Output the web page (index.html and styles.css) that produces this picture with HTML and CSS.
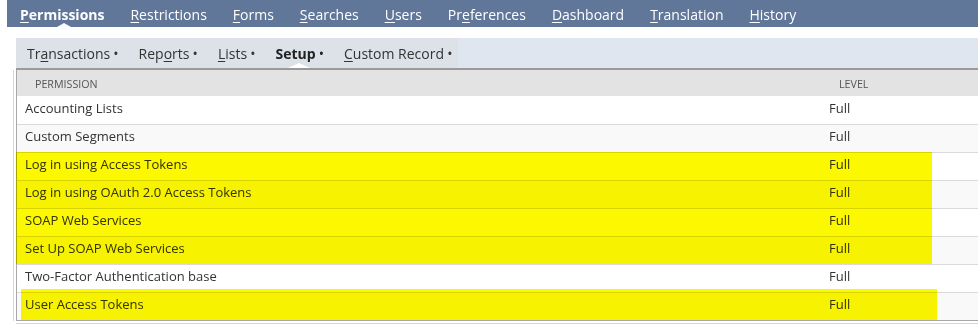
FILE: index.html
```html
<!DOCTYPE html>
<html>
<head>
<meta charset="utf-8">
<link rel="stylesheet" href="styles.css">
</head>
<body>
<div class="page">
  <nav class="topnav">
    <a class="tab active"><u>P</u>ermissions</a>
    <a class="tab"><u>R</u>estrictions</a>
    <a class="tab"><u>F</u>orms</a>
    <a class="tab"><u>S</u>earches</a>
    <a class="tab"><u>U</u>sers</a>
    <a class="tab">Pr<u>e</u>ferences</a>
    <a class="tab"><u>D</u>ashboard</a>
    <a class="tab"><u>T</u>ranslation</a>
    <a class="tab"><u>H</u>istory</a>
  </nav>
  <div class="content">
    <div class="subnav">
      <div class="subtabs">
        <a class="subtab">Tr<u>a</u>nsactions <span class="dot">•</span></a>
        <a class="subtab">Rep<u>o</u>rts <span class="dot">•</span></a>
        <a class="subtab"><u>L</u>ists <span class="dot">•</span></a>
        <a class="subtab active">Setup <span class="dot">•</span></a>
        <a class="subtab"><u>C</u>ustom Record <span class="dot">•</span></a>
      </div>
    </div>
    <div class="tablewrap">
      <table class="perms">
        <thead>
          <tr><th class="c1">Permission</th><th class="c2">Level</th></tr>
        </thead>
        <tbody>
          <tr><td>Accounting Lists</td><td>Full</td></tr>
          <tr><td>Custom Segments</td><td>Full</td></tr>
          <tr><td>Log in using Access Tokens</td><td>Full</td></tr>
          <tr><td>Log in using OAuth 2.0 Access Tokens</td><td>Full</td></tr>
          <tr><td>SOAP Web Services</td><td>Full</td></tr>
          <tr><td>Set Up SOAP Web Services</td><td>Full</td></tr>
          <tr><td>Two-Factor Authentication base</td><td>Full</td></tr>
          <tr><td>User Access Tokens</td><td>Full</td></tr>
        </tbody>
      </table>
    </div>
  </div>
  <div class="mark mark1"></div>
  <div class="mark mark2"></div>
</div>
</body>
</html>
```
FILE: styles.css
```css
html, body {
  margin: 0;
  padding: 0;
  background: #fff;
}
.page {
  position: relative;
  width: 978px;
  height: 334px;
  overflow: hidden;
  font-family: "Open Sans", "Liberation Sans", sans-serif;
}
.topnav {
  margin-left: 7px;
  height: 27px;
  background: #607799;
  display: flex;
  align-items: stretch;
  padding-left: 13px;
  gap: 26px;
}
.tab {
  position: relative;
  color: #fff;
  font-size: 14px;
  line-height: 27px;
  padding-top: 1px;
  box-sizing: border-box;
  height: 27px;
  white-space: nowrap;
}
.tab u {
  text-underline-offset: 2px;
}
.tab.active {
  font-weight: 700;
}
.tab.active::after {
  content: "";
  position: absolute;
  left: 37px;
  bottom: 0;
  border-left: 7px solid transparent;
  border-right: 7px solid transparent;
  border-bottom: 4px solid #fff;
}
.content {
  margin-left: 16px;
  margin-top: 11px;
}
.subnav {
  height: 30px;
  background: #e0e6ef;
  border-bottom: 2px solid #9a9a9a;
  display: flex;
}
.subtabs {
  display: flex;
  align-items: stretch;
  gap: 20px;
  padding-left: 11px;
  padding-right: 6px;
  background: #dde1e8;
}
.subtab {
  position: relative;
  color: #333;
  font-size: 14px;
  line-height: 30px;
  padding-top: 1px;
  box-sizing: border-box;
  height: 30px;
  white-space: nowrap;
}
.subtab u {
  text-underline-offset: 2px;
}
.subtab .dot {
  font-size: 14px;
  font-weight: 400;
  margin-left: -0.5px;
}
.subtab.active {
  font-weight: 700;
  color: #222;
}
.subtab.active::after {
  content: "";
  position: absolute;
  left: 13px;
  bottom: 0;
  border-left: 11px solid transparent;
  border-right: 11px solid transparent;
  border-bottom: 5px solid #fff;
}
.tablewrap {
  border-left: 1px solid #a8a8a8;
  border-bottom: 1px solid #a8a8a8;
  box-shadow: 0 2px 0 0 #fff, 0 3px 0 0 #d6d6d6, -2px 0 0 0 #fff, -3px 0 0 0 #d6d6d6;
}
.perms {
  width: 100%;
  border-collapse: collapse;
  table-layout: fixed;
}
.perms th {
  height: 26px;
  background: #e3e3e3;
  text-align: left;
  font-weight: 400;
  font-size: 10.7px;
  color: #555;
  text-transform: uppercase;
  padding: 1px 0 0 18px;
  box-sizing: border-box;
}
.perms th.c1 {
  width: 804px;
}
.perms td {
  height: 22px;
  padding: 0 0 5px 8px;
  font-size: 13px;
  line-height: 18px;
  color: #333;
  border-top: 1px solid #dadada;
}
.perms tbody tr:first-child td {
  border-top: none;
  height: 23px;
}
.perms tbody tr:nth-child(even) td {
  background: #f9f9f9;
}
.mark {
  position: absolute;
  background: #fcf800;
  mix-blend-mode: multiply;
}
.mark1 {
  left: 16px;
  top: 152px;
  width: 916px;
  height: 112px;
}
.mark2 {
  left: 21px;
  top: 289px;
  width: 916px;
  height: 31px;
}
```
